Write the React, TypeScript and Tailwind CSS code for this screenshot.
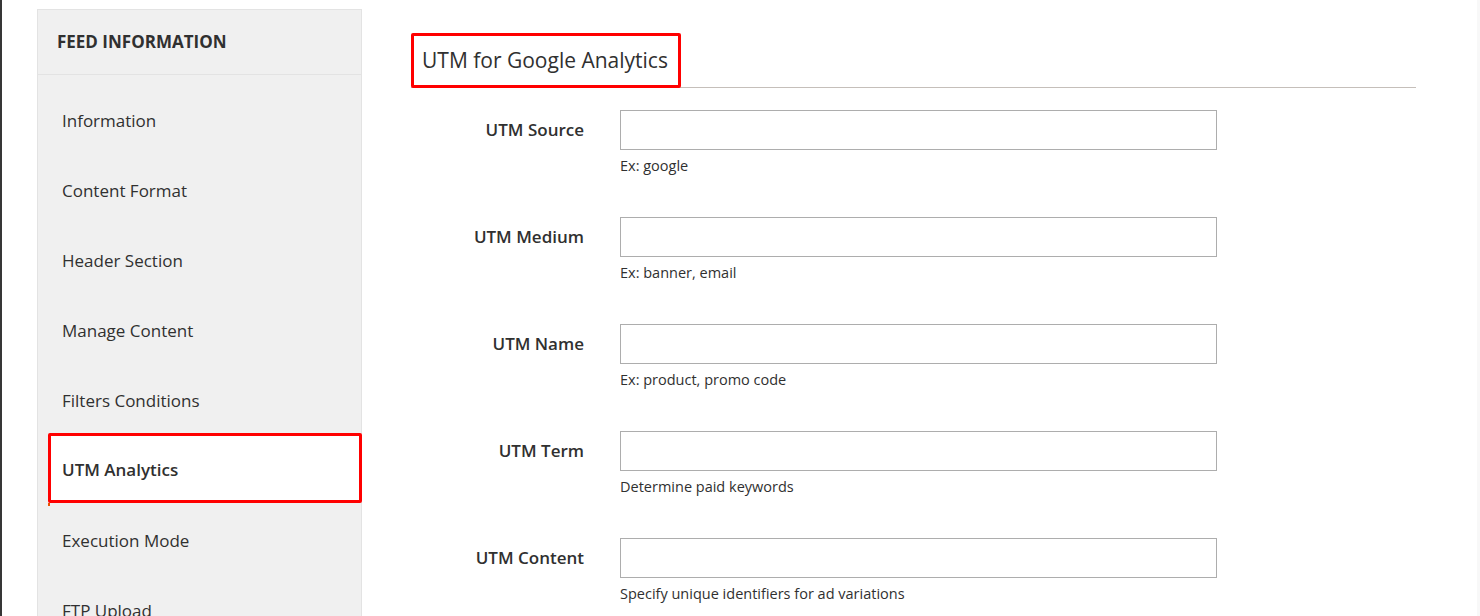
import React from 'react';

const menuItems = [
  'Information',
  'Content Format',
  'Header Section',
  'Manage Content',
  'Filters Conditions',
  'UTM Analytics',
  'Execution Mode',
  'FTP Upload',
];

const fields = [
  { label: 'UTM Source', note: 'Ex: google' },
  { label: 'UTM Medium', note: 'Ex: banner, email' },
  { label: 'UTM Name', note: 'Ex: product, promo code' },
  { label: 'UTM Term', note: 'Determine paid keywords' },
  { label: 'UTM Content', note: 'Specify unique identifiers for ad variations' },
];

const Sidebar: React.FC<{ active: string }> = ({ active }) => (
  <div className="mt-[9px] ml-[35px] w-[325px] shrink-0 self-start border border-[#e3e3e3] bg-[#f0f0f0]">
    <div className="flex h-[65px] items-center border-b border-[#e3e3e3] px-[19px] text-[17px] font-bold uppercase text-[#303030]">
      Feed Information
    </div>
    <div className="pt-[11px]">
      {menuItems.map((item) =>
        item === active ? (
          <div
            key={item}
            className="relative z-10 -mt-[3px] mb-[3px] ml-[10px] flex h-[70px] w-[314px] items-center rounded-[2px] border-[3px] border-[#ff0000] bg-white pt-[4px] pl-[11px] text-[17px] font-semibold text-[#303030]"
          >
            {item}
            <span className="absolute -bottom-[6px] -left-[3px] h-[3px] w-[2px] bg-[#eb5202]" />
          </div>
        ) : (
          <div key={item} className="flex h-[70px] items-center pl-[24px] text-[17px] text-[#303030]">
            {item}
          </div>
        )
      )}
    </div>
  </div>
);

export default function App() {
  return (
    <div className="flex h-[616px] w-[1480px] overflow-hidden bg-white font-['Open_Sans',sans-serif]">
      <div className="w-[2px] shrink-0 bg-[#363636]" />
      <Sidebar active="UTM Analytics" />

      <div className="ml-[49px] w-[1005px] shrink-0 pt-[33px]">
        <div className="flex border-b border-[#c5bfba]">
          <div className="relative z-10 -mb-[1px] flex h-[55px] w-[270px] items-center rounded-[2px] border-[3px] border-[#ff0000] pl-[8px] text-[21px] text-[#303030]">
            UTM for Google Analytics
          </div>
        </div>

        <div className="mt-[22px] flex flex-col gap-[42px]">
          {fields.map((f) => (
            <div key={f.label} className="flex items-start gap-[36px]">
              <label className="w-[173px] text-right text-[17px] font-semibold leading-[40px] text-[#303030]">
                {f.label}
              </label>
              <div className="flex flex-col">
                <input type="text" className="h-[40px] w-[597px] border border-[#adadad] bg-white outline-none" />
                <span className="mt-[7px] text-[14.5px] leading-[18px] text-[#303030]">{f.note}</span>
              </div>
            </div>
          ))}
        </div>
      </div>

      <div className="ml-auto w-[3px] shrink-0 bg-[#f8f8f8]" />
    </div>
  );
}
